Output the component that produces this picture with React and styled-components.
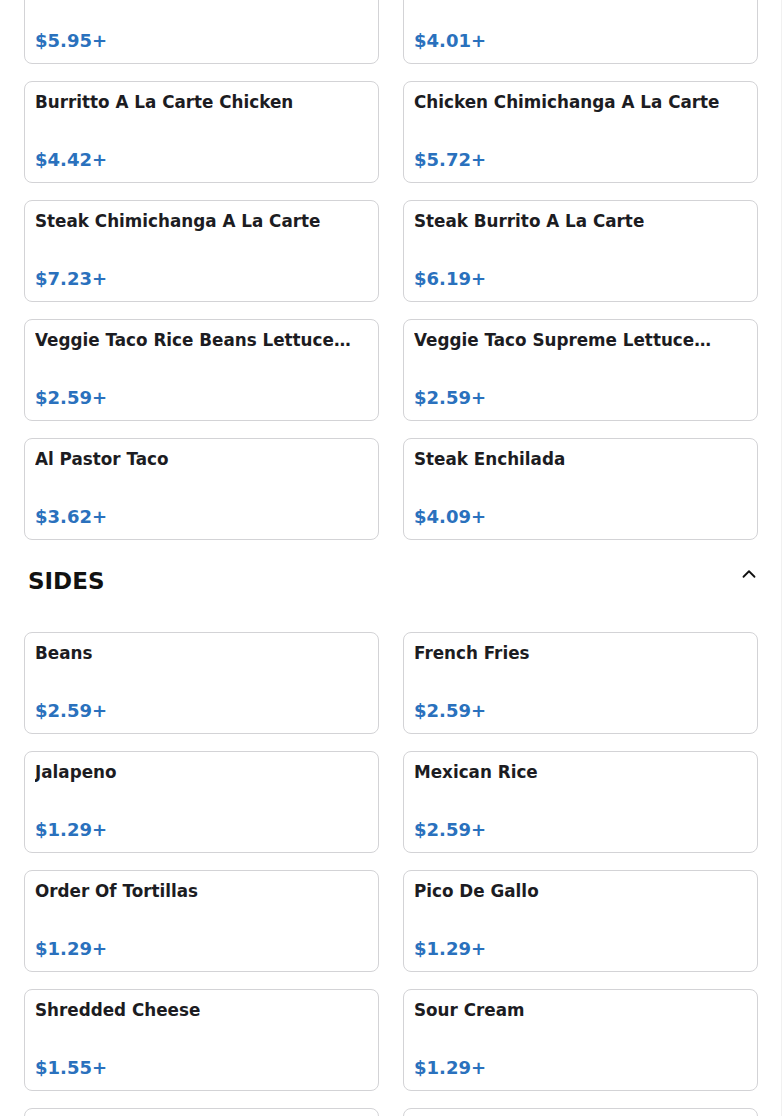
import React from 'react';
import styled, { createGlobalStyle } from 'styled-components';
import { ChevronUp } from 'lucide-react';

const GlobalStyle = createGlobalStyle`
  html, body {
    margin: 0;
    padding: 0;
    background: #fff;
    overflow: hidden;
  }
  body {
    font-family: "DejaVu Sans", Verdana, sans-serif;
  }
  * {
    box-sizing: border-box;
  }
`;

const Page = styled.div`
  width: 782px;
  height: 1116px;
  overflow: hidden;
  border-right: 1px solid #f1f1f1;
`;

const Menu = styled.div`
  margin-top: -38px;
`;

const Grid = styled.div`
  display: grid;
  grid-template-columns: 1fr 1fr;
  column-gap: 24px;
  row-gap: 17px;
  padding: 0 23px 0 24px;
`;

const Card = styled.div`
  height: 102px;
  display: flex;
  flex-direction: column;
  justify-content: space-between;
  padding: 10px 10px 12px;
  border: 1px solid #d3d3d6;
  border-radius: 8px;
  background: #fff;
  min-width: 0;
`;

const Title = styled.div`
  font-size: 16.8px;
  font-weight: 700;
  line-height: 21px;
  color: #1c1c22;
  display: -webkit-box;
  -webkit-line-clamp: 1;
  -webkit-box-orient: vertical;
  overflow: hidden;
`;

const Price = styled.div`
  font-size: 18px;
  font-weight: 700;
  line-height: 21px;
  color: #2a71bd;
`;

const SectionHeader = styled.div`
  height: 92px;
  display: flex;
  justify-content: space-between;
  align-items: flex-start;
  padding: 23px 21px 0 28px;
`;

const SectionTitle = styled.h2`
  margin: 4px 0 0;
  font-size: 23px;
  line-height: 28px;
  font-weight: 700;
  color: #111;
`;

const Toggle = styled.button`
  display: flex;
  padding: 0;
  border: none;
  background: none;
  color: #111;
  cursor: pointer;
`;

const entrees = [
  ['Chicken Enchilada', '$5.95+'],
  ['Chicken Taco', '$4.01+'],
  ['Burritto A La Carte Chicken', '$4.42+'],
  ['Chicken Chimichanga A La Carte', '$5.72+'],
  ['Steak Chimichanga A La Carte', '$7.23+'],
  ['Steak Burrito A La Carte', '$6.19+'],
  ['Veggie Taco Rice Beans Lettuce Cheese', '$2.59+'],
  ['Veggie Taco Supreme Lettuce Cheese Sour Cream', '$2.59+'],
  ['Al Pastor Taco', '$3.62+'],
  ['Steak Enchilada', '$4.09+'],
];

const sides = [
  ['Beans', '$2.59+'],
  ['French Fries', '$2.59+'],
  ['Jalapeno', '$1.29+'],
  ['Mexican Rice', '$2.59+'],
  ['Order Of Tortillas', '$1.29+'],
  ['Pico De Gallo', '$1.29+'],
  ['Shredded Cheese', '$1.55+'],
  ['Sour Cream', '$1.29+'],
  ['Guacamole', '$2.59+'],
  ['Chips', '$1.29+'],
];

const Items = ({ items }) => (
  <Grid>
    {items.map(([name, price]) => (
      <Card key={name}>
        <Title>{name}</Title>
        <Price>{price}</Price>
      </Card>
    ))}
  </Grid>
);

const App = () => {
  return (
    <Page>
      <GlobalStyle />
      <Menu>
        <Items items={entrees} />
        <SectionHeader>
          <SectionTitle>SIDES</SectionTitle>
          <Toggle aria-label="Collapse">
            <ChevronUp size={22} strokeWidth={2} />
          </Toggle>
        </SectionHeader>
        <Items items={sides} />
      </Menu>
    </Page>
  );
};

export default App;
